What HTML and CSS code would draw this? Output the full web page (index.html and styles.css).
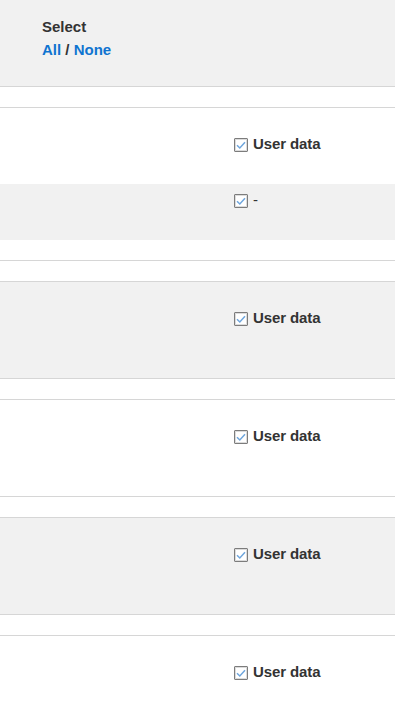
FILE: index.html
```html
<!DOCTYPE html>
<html lang="en">
<head>
<meta charset="utf-8">
<title>Select user data</title>
<link rel="stylesheet" href="styles.css">
</head>
<body>
<div id="page">

<div class="select-bar">
  <div class="select-title">Select</div>
  <div class="select-links"><a href="#">All</a> / <a href="#">None</a></div>
</div>

<div class="group">
  <div class="row">
    <span class="cell"></span>
    <label class="item strong"><span class="check"><svg viewBox="0 0 12 12" width="12" height="12"><path d="M2 6.2 L4.8 9 L10 3.2" /></svg></span>User data</label>
  </div>
  <div class="row shaded">
    <span class="cell"></span>
    <label class="item"><span class="check"><svg viewBox="0 0 12 12" width="12" height="12"><path d="M2 6.2 L4.8 9 L10 3.2" /></svg></span>-</label>
  </div>
</div>

<div class="group shaded">
  <div class="row">
    <span class="cell"></span>
    <label class="item strong"><span class="check"><svg viewBox="0 0 12 12" width="12" height="12"><path d="M2 6.2 L4.8 9 L10 3.2" /></svg></span>User data</label>
  </div>
</div>

<div class="group">
  <div class="row">
    <span class="cell"></span>
    <label class="item strong"><span class="check"><svg viewBox="0 0 12 12" width="12" height="12"><path d="M2 6.2 L4.8 9 L10 3.2" /></svg></span>User data</label>
  </div>
</div>

<div class="group shaded">
  <div class="row">
    <span class="cell"></span>
    <label class="item strong"><span class="check"><svg viewBox="0 0 12 12" width="12" height="12"><path d="M2 6.2 L4.8 9 L10 3.2" /></svg></span>User data</label>
  </div>
</div>

<div class="group">
  <div class="row">
    <span class="cell"></span>
    <label class="item strong"><span class="check"><svg viewBox="0 0 12 12" width="12" height="12"><path d="M2 6.2 L4.8 9 L10 3.2" /></svg></span>User data</label>
  </div>
</div>

</div>
</body>
</html>
```

FILE: styles.css
```css
body { margin: 0; background: #fff; font-family: "Liberation Sans", Arial, sans-serif; font-size: 15px; color: #333; }
#page { display: flex; flex-direction: column; gap: 20px; }

.select-bar { background: #f1f1f1; border-bottom: 1px solid #d6d6d6; padding: 15px 42px 25px; line-height: 23px; font-weight: bold; height: 46px; }
.select-links a { color: #0f74d0; text-decoration: none; }

.group { border-top: 1px solid #d6d6d6; border-bottom: 1px solid #d6d6d6; padding: 20px 0; }
.shaded { background: #f1f1f1; }

.row { display: grid; grid-template-columns: 234px 1fr; height: 56px; box-sizing: border-box; padding-top: 7px; }
.item { display: flex; align-items: flex-start; gap: 5px; line-height: 17px; letter-spacing: -0.1px; }
.item.strong { font-weight: bold; }
.check { display: block; width: 14px; height: 14px; margin-top: 3px; box-sizing: border-box; border: 1px solid #7c7c7c; box-shadow: inset 0 0 0 1px #dcdcdc; border-radius: 1px; background: #fff; }
.check svg { display: block; width: 12px; height: 12px; fill: none; stroke: #6fa6dd; stroke-width: 1.5; }
```
